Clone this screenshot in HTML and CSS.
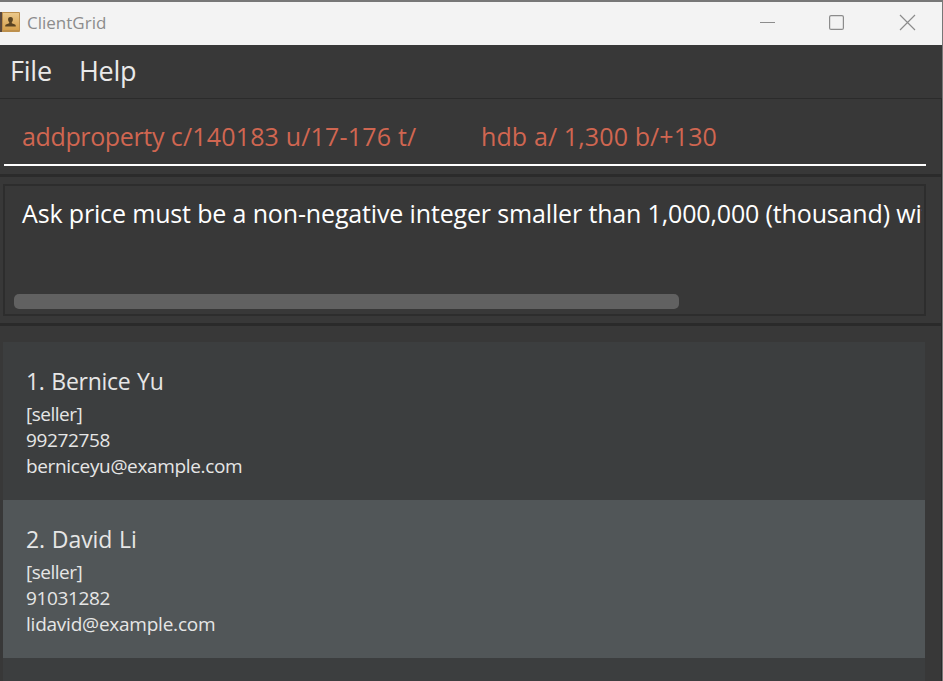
FILE: index.html
```html
<!DOCTYPE html>
<html lang="en">
<head>
<meta charset="utf-8">
<title>ClientGrid</title>
<link rel="stylesheet" href="styles.css">
</head>
<body>
<div class="window">
  <header class="titlebar">
    <svg class="logo" width="20" height="22" viewBox="0 0 20 22">
      <defs><linearGradient id="gold" x1="0" y1="0" x2="0" y2="1"><stop offset="0" stop-color="#ebc88a"/><stop offset="1" stop-color="#d5a04c"/></linearGradient></defs>
      <rect x="0" y="1" width="20" height="20" rx="1" fill="#bd904d"/>
      <rect x="3" y="2" width="16" height="17" fill="url(#gold)"/>
      <rect x="0" y="1" width="2" height="20" fill="#59483d"/>
      <path d="M10.500 6c2 0 2.500 1.200 2.400 2.700-.1 1.300-.6 2-1.100 2.600v1l3.200 1.200c.6.300.8.800.8 2H5.200c0-1.200.2-1.700.8-2l3.200-1.200v-1c-.5-.6-1-1.300-1.100-2.600C8 7.200 8.500 6 10.500 6z" fill="#594322"/>
    </svg>
    <span class="title">ClientGrid</span>
    <svg class="controls" width="160" height="18" viewBox="0 0 160 18" fill="none" stroke="#8c8c8c" stroke-width="1.200">
      <path d="M2 9.500h15" stroke-width="1"/>
      <rect x="71.600" y="2.600" width="13.800" height="13.800" rx="1.500"/>
      <path d="M142 2l15 15M157 2l-15 15"/>
    </svg>
  </header>
  <nav class="menu"><span class="file">File</span><span class="help">Help</span></nav>
  <section class="command"><div class="field"><span class="cmd-a"><span class="verb">addproperty</span> c/140183 u/17-176 t/</span><span class="cmd-b">hdb a/ 1,300 b/+130</span></div></section>
  <section class="result">
    <div class="box">
      <div class="message"><span>Ask price must be a non-negative integer smaller than 1,000,000 (thousand) with</span></div>
      <div class="scroll"></div>
    </div>
  </section>
  <main class="list">
    <article class="card">
      <h2 class="bernice">1. Bernice Yu</h2>
      <p><span class="tag">[seller]</span></p><p><span class="phone">99272758</span></p><p><span class="mail-a">berniceyu@example.com</span></p>
    </article>
    <article class="card alt">
      <h2 class="david">2. David Li</h2>
      <p><span class="tag">[seller]</span></p><p><span class="phone">91031282</span></p><p><span class="mail-b">lidavid@example.com</span></p>
    </article>
    <article class="card"></article>
  </main>
</div>
</body>
</html>
```
FILE: styles.css
```css
* { box-sizing: border-box; }
body { margin: 0; overflow: hidden; font-family: "Open Sans", "Noto Sans", sans-serif; }
.window { width: 943px; height: 681px; overflow: hidden; display: flex; flex-direction: column; background: #383838; border-top: 2px solid #777; border-right: 1px solid #777; }
.window > * { flex-shrink: 0; }
.titlebar { height: 43px; background: #f3f3f3; display: flex; align-items: center; padding-right: 24px; }
.logo { display: block; margin-top: -3px; }
.title { margin-left: 7px; font-size: 17px; line-height: 24px; color: #8c8c8c; margin-top: -2px; }
.controls { margin-left: auto; margin-top: -4px; }
.menu { height: 54px; padding: 7px 0 0 10px; display: flex; border-bottom: 1px solid #2b2b2b; font-size: 27px; line-height: 38px; color: #e9e9e9; }
.file { width: 69px; letter-spacing: -.2px; }
.help { letter-spacing: -.3px; }
.command { height: 78px; padding: 18px 15px 0 4px; border-right: 1px solid #2a2a2a; border-bottom: 3px solid #2b2b2b; }
.field { height: 49px; padding-left: 18px; display: flex; border-bottom: 2px solid; border-image: linear-gradient(#999 50%, #fff 50%) 2; font-size: 25px; line-height: 38px; color: #d06651; white-space: pre; }
.cmd-a { width: 459px; letter-spacing: .18px; }
.verb { letter-spacing: -.36px; }
.cmd-b { letter-spacing: .12px; }
.result { height: 149px; padding: 7px 15px 0 3px; border-right: 1px solid #2a2a2a; border-bottom: 3px solid #2a2a2a; }
.box { height: 132px; border: 2px solid #2d2d2d; padding: 8px 2px 0 9px; }
.message { height: 100px; padding-left: 8px; overflow: hidden; white-space: nowrap; font-size: 25px; line-height: 38px; letter-spacing: -.15px; color: #fff; }
.scroll { width: 665px; height: 15px; border-radius: 5px; background: #616161; }
.list { flex: 1 0 0; padding: 16px 16px 0 3px; border-right: 1px solid #2a2a2a; }
.card { height: 158px; padding: 23px 23px 0; background: #3c3e3f; color: #e6e6e6; }
.card.alt { background: #515658; }
.card h2 { margin: 0 0 3px; font-size: 23px; line-height: 33px; font-weight: 400; word-spacing: 1px; }
.bernice { letter-spacing: -.28px; }
.david { letter-spacing: -.1px; }
.card p { margin: 0; font-size: 19px; line-height: 26px; }
.tag { letter-spacing: -.5px; }
.phone { letter-spacing: -.35px; }
.mail-a { letter-spacing: -.34px; }
.mail-b { letter-spacing: -.23px; }
```
